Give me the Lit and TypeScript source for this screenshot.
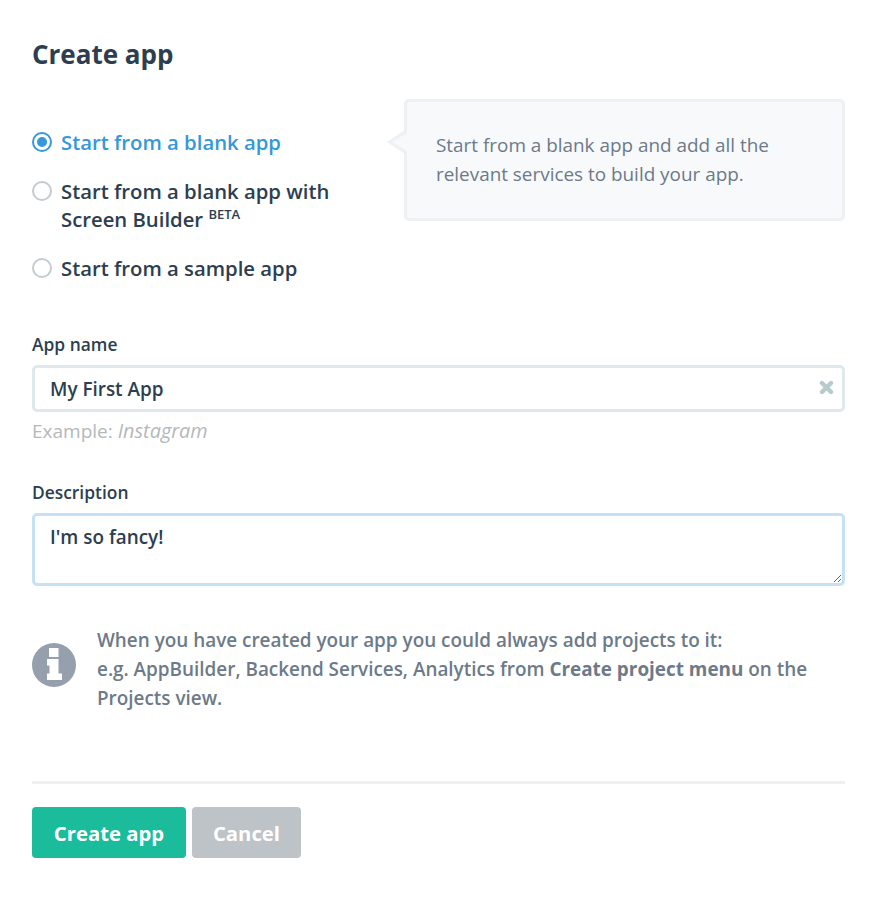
import { html, css, LitElement } from 'lit';
import { customElement, state } from 'lit/decorators.js';
import { classMap } from 'lit/directives/class-map.js';

const OPTIONS = [
  { id: 'blank', label: html`Start from a blank app` },
  { id: 'builder', label: html`Start from a blank app with<br />Screen Builder <sup>BETA</sup>` },
  { id: 'sample', label: html`Start from a sample app` },
];

@customElement('app-root')
export class AppRoot extends LitElement {
  static override styles = css`
    :host {
      display: block;
      height: 900px;
      box-sizing: border-box;
      padding: 36px 40px 0 32px;
      background: #fff;
      color: #2c3e50;
      font-family: 'Open Sans', sans-serif;
      overflow: hidden;
    }

    h1 {
      margin: 0;
      font-size: 26px;
      line-height: 36px;
      font-weight: 700;
    }

    .chooser {
      display: flex;
      justify-content: space-between;
      align-items: flex-start;
      margin-top: 27px;
    }

    .options {
      display: flex;
      flex-direction: column;
      gap: 21px;
      padding-top: 29px;
    }

    .option {
      display: flex;
      gap: 9px;
      font-size: 20.3px;
      line-height: 28px;
      font-weight: 600;
      cursor: pointer;
    }

    .option.active {
      color: #3498db;
    }

    .radio {
      flex: none;
      box-sizing: border-box;
      width: 20px;
      height: 20px;
      margin-top: 4px;
      border: 2px solid #c5cbd0;
      border-radius: 50%;
      background: #fff;
    }

    .option.active .radio {
      border-color: #3498db;
      padding: 3px;
    }

    .option.active .radio::after {
      content: '';
      display: block;
      width: 10px;
      height: 10px;
      border-radius: 50%;
      background: #3498db;
    }

    sup {
      font-size: 13px;
      line-height: 0;
      vertical-align: 8px;
      font-weight: 600;
    }

    .hint {
      position: relative;
      box-sizing: border-box;
      width: 441px;
      height: 122px;
      padding: 29px 29px;
      border: 3px solid #eef1f3;
      border-radius: 5px;
      background: #f8f9fb;
      color: #6c7a89;
      font-size: 18.9px;
      line-height: 29px;
    }

    .hint::before {
      content: '';
      position: absolute;
      left: -20px;
      top: 28px;
      border: 12px solid transparent;
      border-left: 0;
      border-right: 18px solid #eef1f3;
    }

    .hint::after {
      content: '';
      position: absolute;
      left: -15px;
      top: 31px;
      border: 9px solid transparent;
      border-left: 0;
      border-right: 15px solid #f8f9fb;
    }

    .field {
      display: flex;
      flex-direction: column;
    }

    .field.name {
      margin-top: 49px;
    }

    .field.description {
      margin-top: 34px;
    }

    label {
      font-size: 17.4px;
      line-height: 26px;
      font-weight: 600;
      margin-bottom: 8px;
    }

    .input-wrap {
      position: relative;
      display: flex;
    }

    input,
    textarea {
      box-sizing: border-box;
      margin: 0;
      padding: 0 15px;
      border: 3px solid #dfe8ea;
      border-radius: 5px;
      outline: none;
      background: #fff;
      color: #2c3e50;
      font: 600 18.9px 'Open Sans', sans-serif;
    }

    input {
      flex: 1;
      height: 47px;
    }

    textarea {
      flex: none;
      height: 73px;
      padding-top: 7px;
      line-height: 28px;
      border-color: #c5e1f5;
      resize: vertical;
      display: block;
    }

    .clear {
      position: absolute;
      right: 11px;
      top: 15px;
      width: 15px;
      height: 15px;
    }

    .help {
      margin-top: 5px;
      color: #b4b8bb;
      font-size: 19px;
      line-height: 28px;
    }

    .help i {
      font-size: 19.9px;
    }

    .info {
      display: flex;
      align-items: center;
      gap: 21px;
      margin-top: 40px;
      color: #6c7a89;
      font-size: 18.9px;
      line-height: 29px;
      font-weight: 600;
    }

    .info svg {
      flex: none;
      width: 44px;
      height: 44px;
      margin-bottom: 10px;
    }

    .info b {
      font-weight: 700;
    }

    hr {
      height: 3px;
      margin: 68px 0 0;
      border: 0;
      background: #eef1f3;
    }

    .actions {
      display: flex;
      gap: 6px;
      margin-top: 23px;
    }

    button {
      height: 51px;
      border: 0;
      border-radius: 4px;
      color: #fff;
      font: 700 20.3px 'Open Sans', sans-serif;
      cursor: pointer;
    }

    .primary {
      width: 154px;
      background: #1abc9c;
    }

    .secondary {
      width: 109px;
      background: #bdc3c7;
    }
  `;

  @state()
  selected = 'blank';

  override render() {
    return html`
      <h1>Create app</h1>

      <div class="chooser">
        <div class="options">
          ${OPTIONS.map(
            (o) => html`
              <div
                class=${classMap({ option: true, active: o.id === this.selected })}
                @click=${() => (this.selected = o.id)}
              >
                <span class="radio"></span>
                <span>${o.label}</span>
              </div>
            `
          )}
        </div>
        <div class="hint">
          Start from a blank app and add all the<br />relevant services to build your app.
        </div>
      </div>

      <div class="field name">
        <label>App name</label>
        <div class="input-wrap">
          <input type="text" .value=${'My First App'} />
          <svg class="clear" viewBox="0 0 15 15">
            <path d="M3 3 L12 12 M12 3 L3 12" stroke="#b7cbcd" stroke-width="4.4" stroke-linecap="round" />
          </svg>
        </div>
        <div class="help">Example: <i>Instagram</i></div>
      </div>

      <div class="field description">
        <label>Description</label>
        <textarea .value=${"I'm so fancy!"}></textarea>
      </div>

      <div class="info">
        <svg viewBox="0 0 44 44">
          <circle cx="22" cy="22" r="22" fill="#95a0ac" />
          <path
            fill="#fff"
            d="M17 5h9.5v9h-9.5z M15 16h11.5v14.5h3.5v6.5H15v-6.5h2.5v-8H15z"
          />
        </svg>
        <div>
          When you have created your app you could always add projects to it:<br />e.g. AppBuilder,
          Backend Services, Analytics from <b>Create project menu</b> on the Projects view.
        </div>
      </div>

      <hr />

      <div class="actions">
        <button class="primary">Create app</button>
        <button class="secondary">Cancel</button>
      </div>
    `;
  }
}
